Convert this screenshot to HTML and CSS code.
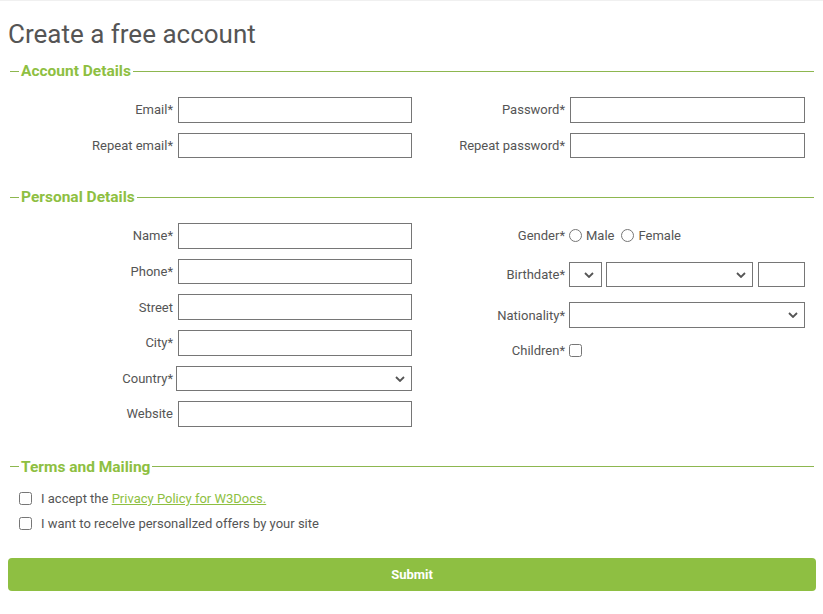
FILE: index.html
```html
<!DOCTYPE html>
<html lang="en">
<head>
<meta charset="utf-8">
<title>Create a free account</title>
<link rel="stylesheet" href="styles.css">
</head>
<body>
<form class="form">
  <h1 class="title">Create a free account</h1>

  <fieldset class="section">
    <legend class="legend">Account Details</legend>
    <div class="cols">
      <div class="col col-left">
        <label class="label" for="email">Email*</label>
        <input class="field" id="email" type="email">
        <label class="label" for="email2">Repeat email*</label>
        <input class="field" id="email2" type="email">
      </div>
      <div class="col col-right">
        <label class="label" for="pw">Password*</label>
        <input class="field" id="pw" type="password">
        <label class="label" for="pw2">Repeat password*</label>
        <input class="field" id="pw2" type="password">
      </div>
    </div>
  </fieldset>

  <fieldset class="section section-personal">
    <legend class="legend">Personal Details</legend>
    <div class="cols">
      <div class="col col-left">
        <label class="label" for="name">Name*</label>
        <input class="field" id="name" type="text">
        <label class="label" for="phone">Phone*</label>
        <input class="field" id="phone" type="tel">
        <label class="label" for="street">Street</label>
        <input class="field" id="street" type="text">
        <label class="label" for="city">City*</label>
        <input class="field" id="city" type="text">
        <label class="label" for="country">Country*</label>
        <span class="sel sel-country">
          <select class="field select" id="country"><option></option></select>
          <svg class="chev" width="10" height="6" viewBox="0 0 10 6"><path d="M1 1 L5 5 L9 1" fill="none" stroke="#555" stroke-width="1.8"/></svg>
        </span>
        <label class="label" for="website">Website</label>
        <input class="field" id="website" type="url">
      </div>
      <div class="col-stack">
        <div class="rrow rrow-gender">
          <span class="label rlabel">Gender*</span>
          <label class="choice"><input class="radio" type="radio" name="g">Male</label>
          <label class="choice choice-2"><input class="radio" type="radio" name="g">Female</label>
        </div>
        <div class="rrow rrow-birth">
          <span class="label rlabel">Birthdate*</span>
          <span class="sel sel-day">
            <select class="field select"><option></option></select>
            <svg class="chev" width="10" height="6" viewBox="0 0 10 6"><path d="M1 1 L5 5 L9 1" fill="none" stroke="#555" stroke-width="1.8"/></svg>
          </span>
          <span class="sel sel-month">
            <select class="field select"><option></option></select>
            <svg class="chev" width="10" height="6" viewBox="0 0 10 6"><path d="M1 1 L5 5 L9 1" fill="none" stroke="#555" stroke-width="1.8"/></svg>
          </span>
          <input class="field year" type="text">
        </div>
        <div class="rrow rrow-nat">
          <label class="label rlabel" for="nat">Nationality*</label>
          <span class="sel sel-nat">
            <select class="field select" id="nat"><option></option></select>
            <svg class="chev" width="10" height="6" viewBox="0 0 10 6"><path d="M1 1 L5 5 L9 1" fill="none" stroke="#555" stroke-width="1.8"/></svg>
          </span>
        </div>
        <div class="rrow rrow-child">
          <label class="label rlabel" for="kids">Children*</label>
          <input class="check check-child" id="kids" type="checkbox">
        </div>
      </div>
    </div>
  </fieldset>

  <fieldset class="section section-terms">
    <legend class="legend">Terms and Mailing</legend>
    <label class="term"><input class="check" type="checkbox">I accept the&nbsp;<a class="link" href="#">Privacy Policy for W3Docs.</a></label>
    <label class="term"><input class="check" type="checkbox">I want to recelve personallzed offers by your site</label>
  </fieldset>

  <button class="submit" type="submit">Submit</button>
</form>
</body>
</html>
```

FILE: styles.css
```css
html, body {
  margin: 0;
  padding: 0;
  background: #fff;
}
body {
  border-top: 1px solid #f0f0f0;
  padding: 0 7px 0 8px;
  font-family: Roboto, "Liberation Sans", Arial, sans-serif;
  color: #555;
}
.form {
  display: flex;
  flex-direction: column;
}
.title {
  margin: 16px 0 11px 0;
  font-size: 26px;
  font-weight: 400;
  line-height: 34px;
  color: #555;
}
.section {
  margin: 0 2px;
  padding: 17px 0 30px 0;
  border: 0;
  border-top: 1px solid #8db74f;
  min-width: 0;
}
.section-personal {
  padding-bottom: 31px;
}
.legend {
  margin-left: 9px;
  padding: 0 2px;
  font-size: 15.5px;
  font-weight: 700;
  line-height: 18px;
  color: #8ebf42;
}
.cols {
  display: flex;
}
.col {
  display: grid;
  align-items: center;
  column-gap: 5px;
  row-gap: 10px;
}
.col-left {
  grid-template-columns: 163px 234px;
  width: 402px;
}
.col-right {
  grid-template-columns: 153px 235px;
}
.label {
  text-align: right;
  font-size: 13px;
  color: #555;
  white-space: nowrap;
}
.field {
  box-sizing: border-box;
  height: 25.6px;
  width: 100%;
  margin: 0;
  border: 1px solid #767676;
  border-radius: 0;
  background: #fff;
  font-family: inherit;
  font-size: 13px;
  padding: 0 4px;
}
.sel {
  position: relative;
  display: block;
  height: 25.6px;
}
.select {
  -webkit-appearance: none;
  appearance: none;
  display: block;
  padding: 0 20px 0 4px;
  color: #555;
}
.chev {
  position: absolute;
  right: 7px;
  top: 10px;
  pointer-events: none;
}
.sel-country {
  width: 236px;
  margin-left: -2px;
}
.col-stack {
  display: flex;
  flex-direction: column;
}
.rrow {
  display: flex;
  align-items: center;
}
.rlabel {
  width: 153px;
  flex: none;
}
.rrow-gender {
  height: 25.6px;
}
.rrow-birth {
  margin-top: 13px;
}
.rrow-nat {
  margin-top: 15px;
}
.rrow-child {
  margin-top: 15px;
}
.choice {
  display: flex;
  align-items: center;
  font-size: 13px;
  color: #555;
}
.radio {
  margin: 0 4px 0 4px;
  width: 13px;
  height: 13px;
}
.choice-2 {
  margin-left: 3px;
}
.sel-day {
  width: 33px;
  margin-left: 4px;
  flex: none;
}
.sel-day .chev {
  right: 8px;
}
.sel-month {
  width: 147px;
  margin-left: 4px;
  flex: none;
}
.year {
  width: 47px;
  margin-left: 5px;
  flex: none;
}
.sel-nat {
  width: 236px;
  margin-left: 4px;
  flex: none;
}
.check {
  width: 13px;
  height: 13px;
  margin: 0 9px 0 9px;
}
.check-child {
  margin: 0 0 0 4px;
}
.section-terms {
  padding: 15px 0 17px 0;
  display: flex;
  flex-direction: column;
}
.term {
  display: flex;
  align-items: center;
  height: 16px;
  margin-bottom: 9px;
  font-size: 13px;
  color: #555;
}
.link {
  color: #8ebf42;
  text-decoration: underline;
}
.submit {
  height: 33px;
  width: 100%;
  border: 0;
  border-radius: 4px;
  background: #8ebf42;
  color: #fff;
  font-family: inherit;
  font-size: 13px;
  font-weight: 700;
  cursor: pointer;
}
```
